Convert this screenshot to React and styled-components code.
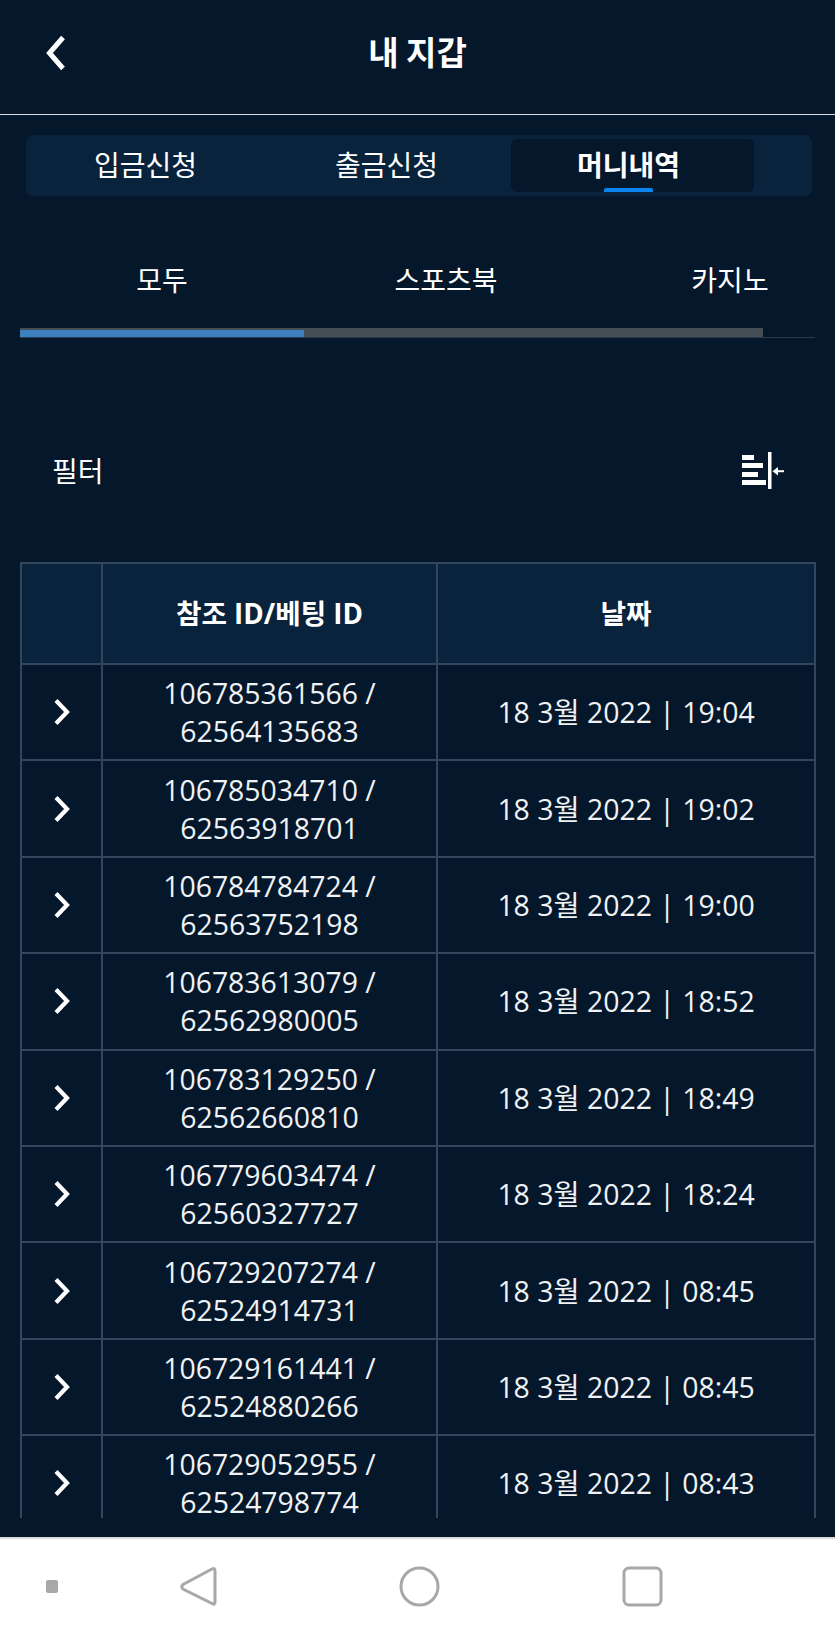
import React from 'react';
import styled, { createGlobalStyle } from 'styled-components';

const GlobalStyle = createGlobalStyle`
  html, body {
    margin: 0;
    padding: 0;
    background: #05172a;
  }
  * {
    box-sizing: border-box;
  }
`;

const Screen = styled.div`
  width: 835px;
  height: 1634px;
  display: flex;
  flex-direction: column;
  overflow: hidden;
  background: #05172a;
  color: #fff;
  font-family: "Open Sans", "Noto Sans CJK KR", sans-serif;
`;

const Content = styled.main`
  height: 1537px;
  flex: none;
  display: flex;
  flex-direction: column;
`;

const Header = styled.header`
  height: 115px;
  flex: none;
  display: flex;
  align-items: center;
  justify-content: center;
  padding-bottom: 13px;
  position: relative;
  border-bottom: 1.5px solid #d8dbde;
`;

const BackButton = styled.svg`
  position: absolute;
  left: 43px;
  top: 34px;
`;

const Title = styled.h1`
  margin: 0;
  font-size: 33px;
  line-height: 44px;
  font-weight: 700;
  font-family: "Noto Sans CJK KR", sans-serif;
`;

const WalletTabs = styled.nav`
  height: 61px;
  flex: none;
  margin: 20px 23px 0 26px;
  padding: 4px 0;
  display: grid;
  grid-template-columns: 242px 243px 243px;
  align-items: stretch;
  background: #0a233d;
  border-radius: 7px;
`;

const WalletTab = styled.div`
  position: relative;
  display: flex;
  align-items: center;
  justify-content: center;
  padding: 0 ${(p) => p.$shift}px 4px 0;
  font-family: "Noto Sans CJK KR", sans-serif;
  font-size: 28px;
  font-weight: ${(p) => (p.$active ? 700 : 400)};
  background: ${(p) => (p.$active ? '#05172a' : 'transparent')};
  border-radius: 6px;
`;

const ActiveMark = styled.span`
  position: absolute;
  left: 93px;
  bottom: 0;
  width: 49px;
  height: 4px;
  background: #0a84ee;
  border-radius: 2px 2px 0 0;
`;

const GameTabs = styled.div`
  width: 795px;
  flex: none;
  margin: 0 20px;
  overflow: hidden;
`;

const GameTabRow = styled.div`
  display: grid;
  grid-template-columns: repeat(3, 284px);
  height: 132px;
  padding-top: 61px;
  font-family: "Noto Sans CJK KR", sans-serif;
  font-size: 28px;
  line-height: 44px;
  text-align: center;
`;

const ScrollTrack = styled.div`
  height: 10px;
  border-bottom: 1px solid #2a3a4c;
`;

const ScrollThumb = styled.div`
  width: 743px;
  height: 9px;
  background: #454d57;
`;

const ScrollActive = styled.div`
  width: 284px;
  height: 7px;
  position: relative;
  top: 2px;
  background: #3d80bf;
`;

const FilterRow = styled.div`
  flex: none;
  height: 224px;
  padding: 40px 51px 0 52px;
  display: flex;
  align-items: center;
  justify-content: space-between;
  font-family: "Noto Sans CJK KR", sans-serif;
  font-size: 28px;
`;

const TableClip = styled.div`
  height: 956px;
  flex: none;
  margin: 0 18px 0 20px;
  overflow: hidden;
`;

const Table = styled.table`
  width: 794px;
  table-layout: fixed;
  border-collapse: collapse;
  text-align: center;
`;

const HeadCell = styled.th`
  height: 101px;
  padding: 0 0 4px;
  font-size: 27.7px;
  font-weight: 700;
  background: #0a233d;
  border: 2px solid #33475c;
`;

const Cell = styled.td`
  height: 96.4px;
  padding: 0;
  font-size: 28.4px;
  line-height: 38px;
  font-weight: 400;
  color: #f0f2f4;
  border: 2px solid #33475c;
`;

const SystemBar = styled.footer`
  flex: 1;
  display: flex;
  align-items: center;
  position: relative;
  background: #fff;
  border-top: 2px solid #d9dcdc;
`;

const SystemIcon = styled.svg`
  position: absolute;
  left: ${(p) => p.$left}px;
  top: ${(p) => p.$top}px;
`;

const rows = [
  ['106785361566', '62564135683', '19:04'],
  ['106785034710', '62563918701', '19:02'],
  ['106784784724', '62563752198', '19:00'],
  ['106783613079', '62562980005', '18:52'],
  ['106783129250', '62562660810', '18:49'],
  ['106779603474', '62560327727', '18:24'],
  ['106729207274', '62524914731', '08:45'],
  ['106729161441', '62524880266', '08:45'],
  ['106729052955', '62524798774', '08:43'],
];

function RowArrow() {
  return (
    <svg width="18" height="26" viewBox="0 0 18 26" style={{ display: 'block', margin: '0 auto' }}>
      <path d="M3 1.5 L14 13 L3 24.5" fill="none" stroke="#fff" strokeWidth="4.2" />
    </svg>
  );
}

function CollapseIcon() {
  return (
    <svg width="42" height="37" viewBox="0 0 42 37">
      <g fill="#fff">
        <rect x="0" y="3" width="12" height="5" />
        <rect x="0" y="11" width="21" height="5" />
        <rect x="0" y="20" width="16" height="5" />
        <rect x="0" y="28" width="24" height="5" />
        <rect x="26" y="0" width="3.5" height="37" />
        <rect x="34" y="18.2" width="8" height="2" />
        <path d="M30.5 19.2 L36 15 V23.4 Z" />
      </g>
    </svg>
  );
}

export default function App() {
  return (
    <Screen>
      <GlobalStyle />
      <Content>
        <Header>
          <BackButton width="26" height="38" viewBox="0 0 26 38">
            <path d="M20 3.5 L6.5 19 L20 34.5" fill="none" stroke="#fff" strokeWidth="5" />
          </BackButton>
          <Title>내 지갑</Title>
        </Header>

        <WalletTabs>
          <WalletTab $shift={3}>입금신청</WalletTab>
          <WalletTab $shift={6}>출금신청</WalletTab>
          <WalletTab $active $shift={8}>
            머니내역
            <ActiveMark />
          </WalletTab>
        </WalletTabs>

        <GameTabs>
          <GameTabRow>
            <div>모두</div>
            <div>스포츠북</div>
            <div>카지노</div>
          </GameTabRow>
          <ScrollTrack>
            <ScrollThumb>
              <ScrollActive />
            </ScrollThumb>
          </ScrollTrack>
        </GameTabs>

        <FilterRow>
          <span>필터</span>
          <CollapseIcon />
        </FilterRow>

        <TableClip>
          <Table>
            <colgroup>
              <col style={{ width: 81 }} />
              <col style={{ width: 335 }} />
              <col style={{ width: 378 }} />
            </colgroup>
            <thead>
              <tr>
                <HeadCell />
                <HeadCell>참조 ID/베팅 ID</HeadCell>
                <HeadCell>날짜</HeadCell>
              </tr>
            </thead>
            <tbody>
              {rows.map(([ref, bet, time]) => (
                <tr key={ref}>
                  <Cell>
                    <RowArrow />
                  </Cell>
                  <Cell>
                    {ref} /<br />
                    {bet}
                  </Cell>
                  <Cell>18 3월 2022 | {time}</Cell>
                </tr>
              ))}
            </tbody>
          </Table>
        </TableClip>
      </Content>

      <SystemBar>
        <SystemIcon $left={46} $top={41} width="12" height="13" viewBox="0 0 12 13">
          <rect width="12" height="13" rx="2" fill="#a8a8a8" />
        </SystemIcon>
        <SystemIcon $left={179} $top={27} width="38" height="41" viewBox="0 0 38 41">
          <path d="M33 3 Q36 1.5 36 5 V36 Q36 39.5 33 37.5 L4 23 Q1.5 20.5 4 18.5 Z" fill="none" stroke="#a8a8a8" strokeWidth="3" />
        </SystemIcon>
        <SystemIcon $left={399} $top={27} width="41" height="41" viewBox="0 0 41 41">
          <circle cx="20.5" cy="20.5" r="18.5" fill="none" stroke="#a8a8a8" strokeWidth="3" />
        </SystemIcon>
        <SystemIcon $left={622} $top={27} width="41" height="41" viewBox="0 0 41 41">
          <rect x="2" y="2" width="37" height="37" rx="5" fill="none" stroke="#a8a8a8" strokeWidth="3" />
        </SystemIcon>
      </SystemBar>
    </Screen>
  );
}
